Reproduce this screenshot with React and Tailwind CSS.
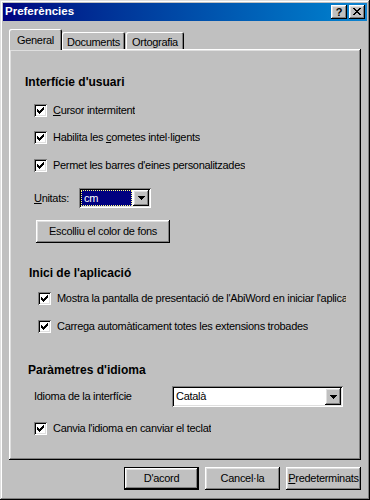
import React from 'react';

const raised =
  'shadow-[inset_-1px_-1px_#000000,inset_1px_1px_#ffffff,inset_-2px_-2px_#808080,inset_2px_2px_#dfdfdf]';
const sunken =
  'shadow-[inset_1px_1px_#808080,inset_-1px_-1px_#ffffff,inset_2px_2px_#000000,inset_-2px_-2px_#dfdfdf]';

const Check = () => (
  <span className={`w-[13px] h-[13px] bg-white shrink-0 block ${sunken}`}>
    <svg width="13" height="13" viewBox="0 0 13 13" shapeRendering="crispEdges">
      <path
        fill="#000"
        d="M3 5h1v3H3z M4 6h1v3H4z M5 7h1v3H5z M6 6h1v3H6z M7 5h1v3H7z M8 4h1v3H8z M9 3h1v3H9z"
      />
    </svg>
  </span>
);

const CheckRow = ({ className = '', children }) => (
  <div className={`h-[16px] flex items-center gap-[6px] ${className}`}>
    <Check />
    <span className="whitespace-nowrap overflow-hidden">{children}</span>
  </div>
);

const Heading = ({ className = '', children }) => (
  <div className={`h-[16px] flex items-center text-[12px] font-bold tracking-normal ${className}`}>
    {children}
  </div>
);

const Arrow = () => (
  <svg width="7" height="4" viewBox="0 0 7 4" shapeRendering="crispEdges">
    <path fill="#000" d="M0 0h7v1H0z M1 1h5v1H1z M2 2h3v1H2z M3 3h1v1H3z" />
  </svg>
);

const DropButton = () => (
  <div className={`w-[16px] shrink-0 bg-[#c0c0c0] flex items-center justify-center ${raised}`}>
    <Arrow />
  </div>
);

const Button = ({ className = '', children }) => (
  <div className={`h-[23px] bg-[#c0c0c0] flex items-center justify-center ${raised} ${className}`}>
    {children}
  </div>
);

export default function App() {
  return (
    <div className="w-[370px] h-[500px] bg-[#c0c0c0] p-[3px] flex flex-col text-[11px] tracking-[-0.3px] text-black font-['Liberation_Sans',Arial,sans-serif] shadow-[inset_-1px_-1px_#000000,inset_1px_1px_#dfdfdf,inset_-2px_-2px_#808080,inset_2px_2px_#ffffff]">
      {/* Title bar */}
      <div className="h-[18px] shrink-0 flex items-center justify-between pl-[2px] pr-[2px] bg-linear-to-r from-[#000080] to-[#1084d0]">
        <span className="text-white font-bold text-[11.5px] tracking-normal">Preferències</span>
        <div className="flex gap-[2px]">
          <div className={`w-[16px] h-[14px] bg-[#c0c0c0] flex items-center justify-center font-bold text-[11px] leading-none ${raised}`}>
            ?
          </div>
          <div className={`w-[16px] h-[14px] bg-[#c0c0c0] ${raised}`}>
            <svg width="16" height="14" viewBox="0 0 16 14" shapeRendering="crispEdges">
              <path
                fill="#000"
                d="M4 3h2v1H4z M10 3h2v1h-2z M5 4h2v1H5z M9 4h2v1H9z M6 5h4v1H6z M7 6h2v1H7z M6 7h4v1H6z M5 8h2v1H5z M9 8h2v1H9z M4 9h2v1H4z M10 9h2v1h-2z"
              />
            </svg>
          </div>
        </div>
      </div>

      {/* Body */}
      <div className="flex-1 flex flex-col px-[6px] pt-[8px]">
        {/* Tabs */}
        <div className="h-[20px] flex items-end relative z-10">
          <div className="w-[53px] h-[21px] mb-[-1px] bg-[#c0c0c0] rounded-t-[2px] flex items-start justify-center pt-[3px] shadow-[inset_1px_1px_#ffffff,inset_-1px_0_#000000,inset_-2px_0_#808080]">
            General
          </div>
          <div className="w-[63px] h-[17px] bg-[#c0c0c0] rounded-t-[2px] flex items-start justify-center pt-[2px] shadow-[inset_1px_1px_#ffffff,inset_-1px_0_#000000,inset_-2px_0_#808080]">
            Documents
          </div>
          <div className="w-[58px] h-[17px] ml-[1px] bg-[#c0c0c0] rounded-t-[2px] flex items-start justify-center pt-[2px] shadow-[inset_1px_1px_#ffffff,inset_-1px_0_#000000,inset_-2px_0_#808080]">
            Ortografia
          </div>
        </div>

        {/* Panel */}
        <div className="h-[411px] flex flex-col pt-[25px] pr-[15px] shadow-[inset_-1px_-1px_#000000,inset_1px_1px_#ffffff,inset_-2px_-2px_#808080,inset_2px_2px_#dfdfdf]">
          <Heading className="pl-[16px]">Interfície d'usuari</Heading>
          <div className="pl-[25px] flex flex-col">
            <CheckRow className="mt-[12px]">
              <u>C</u>ursor intermitent
            </CheckRow>
            <CheckRow className="mt-[11px]">
              Habilita les <u>c</u>ometes intel·ligents
            </CheckRow>
            <CheckRow className="mt-[12px]">Permet les barres d'eines personalitzades</CheckRow>

            <div className="mt-[15px] h-[20px] flex items-center">
              <span className="w-[45px]">
                <u>U</u>nitats:
              </span>
              <div className={`w-[72px] h-[20px] bg-white flex p-[2px] ${sunken}`}>
                <div className="flex-1 mr-[1px] bg-[#000080] text-white flex items-center pl-[2px] border border-dotted border-[#ffff80]">
                  cm
                </div>
                <DropButton />
              </div>
            </div>

            <Button className="mt-[12px] ml-[2px] w-[134px]">Escolliu el color de fons</Button>
          </div>

          <Heading className="pl-[20px] mt-[22px]">Inici de l'aplicació</Heading>
          <div className="pl-[29px] flex flex-col">
            <CheckRow className="mt-[9px] gap-[5px]">
              Mostra la pantalla de presentació de l'AbiWord en iniciar l'aplicació
            </CheckRow>
            <CheckRow className="mt-[12px] gap-[5px]">
              Carrega automàticament totes les extensions trobades
            </CheckRow>
          </div>

          <Heading className="pl-[19px] mt-[28px]">Paràmetres d'idioma</Heading>
          <div className="pl-[25px] flex flex-col">
            <div className="mt-[8px] h-[21px] flex items-center">
              <span className="w-[138px]">Idioma de la interfície</span>
              <div className={`w-[171px] h-[21px] bg-white flex p-[2px] ${sunken}`}>
                <div className="flex-1 flex items-center pl-[2px]">Català</div>
                <DropButton />
              </div>
            </div>
            <CheckRow className="mt-[13px]">Canvia l'idioma en canviar el teclat</CheckRow>
          </div>
        </div>

        {/* Buttons */}
        <div className="mt-[7px] flex justify-end gap-[6px]">
          <Button className="w-[75px] shadow-[inset_0_0_0_1px_#000000,inset_-2px_-2px_#000000,inset_2px_2px_#ffffff,inset_-3px_-3px_#808080,inset_3px_3px_#dfdfdf]">
            D'acord
          </Button>
          <Button className="w-[75px]">Cancel·la</Button>
          <Button className="w-[75px]">
            <span>
              <u>P</u>redeterminats
            </span>
          </Button>
        </div>
      </div>
    </div>
  );
}
